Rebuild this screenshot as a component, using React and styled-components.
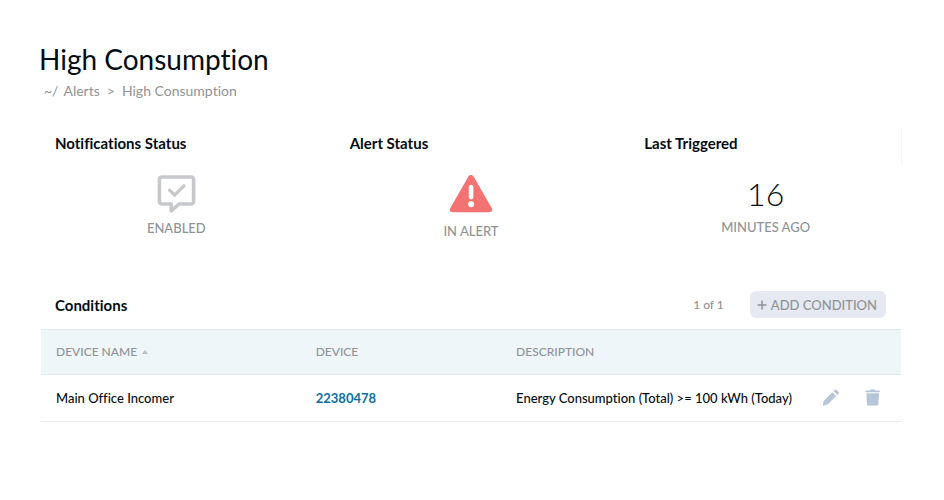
import React, { useState } from "react";
import styled, { createGlobalStyle } from "styled-components";

const GlobalStyle = createGlobalStyle`
  * {
    box-sizing: border-box;
  }

  body {
    margin: 0;
    background-color: #ffffff;
    color: #030d14;
    font-family: Lato, "Open Sans", sans-serif;
    font-size: 13px;
    font-variant-ligatures: none;
    line-height: 20px;
  }
`;

const Page = styled.main`
  padding: 39px 31px 40px 29px;
`;

const PageHeader = styled.header`
  padding: 0 10px;
`;

const Title = styled.h1`
  margin: 0;
  font-size: 28px;
  font-weight: 400;
  line-height: 40px;
`;

const Breadcrumbs = styled.nav`
  display: flex;
  gap: 7px;
  padding: 2px 5px 0;
  color: #8f9396;
  font-size: 14px;
  line-height: 20px;

  a {
    color: inherit;
    text-decoration: none;
  }
`;

const Crumb = styled.span`
  display: flex;
  gap: 5px;
`;

const StatusRow = styled.section`
  display: grid;
  grid-template-columns: repeat(3, 1fr);
  padding-top: 26px;
`;

const StatusCard = styled.article`
  position: relative;
  display: flex;
  flex-direction: column;
`;

const CardEdge = styled.span`
  position: absolute;
  top: 0;
  right: 11px;
  width: 1px;
  height: 38px;
  background-color: #f4f6f8;
`;

const SectionTitle = styled.h2`
  margin: 0;
  font-size: 15px;
  font-weight: 700;
  line-height: 20px;
`;

const CardTitle = styled(SectionTitle)`
  padding: 6px 26px 0;
`;

const CardBody = styled.div`
  display: flex;
  flex-direction: column;
  align-items: center;
  padding-top: 20px;
`;

const StatusLabel = styled.span`
  margin-top: ${(props) => props.$gap}px;
  color: #8f9396;
  font-size: 13px;
  font-weight: 500;
  line-height: 20px;
  text-transform: uppercase;
`;

const BigNumber = styled.span`
  font-size: 32px;
  font-weight: 300;
  line-height: 42px;
`;

const ConditionsPanel = styled.section`
  margin: 50px 12px 0 12px;
`;

const PanelHeader = styled.div`
  display: flex;
  align-items: center;
  justify-content: space-between;
  padding: 0 15px 11px 14px;
`;

const PanelActions = styled.div`
  display: flex;
  align-items: center;
  gap: 26px;
`;

const Count = styled.span`
  color: #8f9396;
  font-size: 12px;
  font-weight: 500;
`;

const AddButton = styled.button`
  display: flex;
  align-items: center;
  gap: 4px;
  height: 27px;
  padding: 0 9px 0 7px;
  border: 0;
  border-radius: 6px;
  background-color: #e6e9f2;
  color: #8f9396;
  font-family: inherit;
  font-size: 13px;
  font-weight: 500;
  cursor: pointer;
`;

const Table = styled.table`
  width: 100%;
  border-collapse: collapse;
  table-layout: fixed;

  th,
  td {
    padding: 0 0 0 15px;
    text-align: left;
    white-space: nowrap;
  }

  th {
    height: 45px;
    border-top: 1px solid #dfe8f0;
    border-bottom: 1px solid #dfe8f0;
    background-color: #eef6fa;
    color: #8f9396;
    font-size: 12px;
    font-weight: 500;
    text-transform: uppercase;
  }

  td {
    height: 47px;
    border-bottom: 1px solid #e6ebf3;
    font-weight: 500;
  }
`;

const Column = styled.col`
  width: ${(props) => props.$width};
`;

const SortButton = styled.button`
  display: flex;
  align-items: center;
  gap: 4px;
  padding: 0;
  border: 0;
  background: none;
  color: inherit;
  font: inherit;
  text-transform: inherit;
  cursor: pointer;
`;

const DeviceLink = styled.a`
  color: #0a6fa6;
  font-weight: 700;
  text-decoration: none;
`;

const RowActions = styled.div`
  display: flex;
  justify-content: flex-end;
  gap: 25px;
  padding-right: 20px;
`;

const IconButton = styled.button`
  display: flex;
  padding: 0;
  border: 0;
  background: none;
  color: #b6c5d9;
  cursor: pointer;
`;

const NotificationIcon = () => (
  <svg width="40" height="41" viewBox="0 0 40 41" fill="none" stroke="#c6c8cb" strokeLinecap="round" strokeLinejoin="round" aria-hidden="true">
    <path d="M5.8 4h29.4a2.4 2.4 0 0 1 2.4 2.4v22.2a2.4 2.4 0 0 1-2.4 2.4H23L15.2 37.8V31H5.8a2.4 2.4 0 0 1-2.4-2.4V6.4A2.4 2.4 0 0 1 5.8 4z" strokeWidth="3.6" />
    <path d="M13.6 17.2l5 5 9.4-9.4" strokeWidth="3.2" />
  </svg>
);

const AlertIcon = () => (
  <svg width="44" height="41" viewBox="0 -1 44 41" aria-hidden="true">
    <path d="M19.4 2.6Q22 -1 24.6 2.6L42.8 34.2Q44.4 38 40.4 38.3H3.6Q-.4 38 1.2 34.2Z" fill="#f37272" />
    <rect x="19.8" y="10.8" width="4.6" height="14.6" rx="2.3" fill="#ffffff" />
    <circle cx="22.1" cy="30.2" r="3" fill="#ffffff" />
  </svg>
);

const PlusIcon = () => (
  <svg width="10" height="10" viewBox="0 0 10 10" stroke="currentColor" strokeWidth="1.5" aria-hidden="true">
    <path d="M5 .5v9M.5 5h9" />
  </svg>
);

const SortIcon = () => (
  <svg width="8" height="6" viewBox="0 0 8 6" fill="#bcc1c5" aria-hidden="true">
    <path d="M4 1l3.2 4H.8z" />
  </svg>
);

const PencilIcon = () => (
  <svg width="18" height="18" viewBox="0 0 18 18" fill="currentColor" aria-hidden="true">
    <path d="M10.3 3.2l3.9 3.9-8.7 8.5L.6 16.8l1.2-5z" />
    <path d="M11.4 2.1l1.3-1.2q1-.8 2 0l1.8 1.8q.8 1 0 2L15.3 6z" />
  </svg>
);

const TrashIcon = () => (
  <svg width="16" height="18" viewBox="0 0 16 18" fill="currentColor" aria-hidden="true">
    <path d="M.6 1.4h4.2l.9-.9h4l.9.9h4.2v1.8H.6z" />
    <path d="M1.4 4.2H14l-.6 10.9q-.1 1.5-1.6 1.5H3.6q-1.5 0-1.6-1.5z" />
  </svg>
);

const conditions = [
  {
    name: "Main Office Incomer",
    device: "22380478",
    description: "Energy Consumption (Total) >= 100 kWh (Today)",
  },
];

function App() {
  const [ascending, setAscending] = useState(true);

  const rows = [...conditions].sort((a, b) =>
    ascending ? a.name.localeCompare(b.name) : b.name.localeCompare(a.name)
  );

  return (
    <>
      <GlobalStyle />
      <Page>
        <PageHeader>
          <Title>High Consumption</Title>
          <Breadcrumbs aria-label="Breadcrumb">
            <Crumb>
              <span>~/</span>
              <a href="#alerts">Alerts</a>
            </Crumb>
            <span>&gt;</span>
            <span>High Consumption</span>
          </Breadcrumbs>
        </PageHeader>

        <StatusRow>
          <StatusCard>
            <CardTitle>Notifications Status</CardTitle>
            <CardBody>
              <NotificationIcon />
              <StatusLabel $gap={4}>Enabled</StatusLabel>
            </CardBody>
          </StatusCard>
          <StatusCard>
            <CardTitle>Alert Status</CardTitle>
            <CardBody>
              <AlertIcon />
              <StatusLabel $gap={7}>In Alert</StatusLabel>
            </CardBody>
          </StatusCard>
          <StatusCard>
            <CardEdge />
            <CardTitle>Last Triggered</CardTitle>
            <CardBody>
              <BigNumber>16</BigNumber>
              <StatusLabel $gap={2}>Minutes Ago</StatusLabel>
            </CardBody>
          </StatusCard>
        </StatusRow>

        <ConditionsPanel>
          <PanelHeader>
            <SectionTitle>Conditions</SectionTitle>
            <PanelActions>
              <Count>1 of 1</Count>
              <AddButton type="button">
                <PlusIcon />
                ADD CONDITION
              </AddButton>
            </PanelActions>
          </PanelHeader>

          <Table>
            <colgroup>
              <Column $width="30.2%" />
              <Column $width="23.3%" />
              <Column />
              <Column $width="110px" />
            </colgroup>
            <thead>
              <tr>
                <th>
                  <SortButton type="button" onClick={() => setAscending(!ascending)}>
                    Device Name
                    <SortIcon />
                  </SortButton>
                </th>
                <th>Device</th>
                <th>Description</th>
                <th aria-label="Actions" />
              </tr>
            </thead>
            <tbody>
              {rows.map((row) => (
                <tr key={row.device}>
                  <td>{row.name}</td>
                  <td>
                    <DeviceLink href={`#device-${row.device}`}>{row.device}</DeviceLink>
                  </td>
                  <td>{row.description}</td>
                  <td>
                    <RowActions>
                      <IconButton type="button" aria-label="Edit condition">
                        <PencilIcon />
                      </IconButton>
                      <IconButton type="button" aria-label="Delete condition">
                        <TrashIcon />
                      </IconButton>
                    </RowActions>
                  </td>
                </tr>
              ))}
            </tbody>
          </Table>
        </ConditionsPanel>
      </Page>
    </>
  );
}

export default App;
